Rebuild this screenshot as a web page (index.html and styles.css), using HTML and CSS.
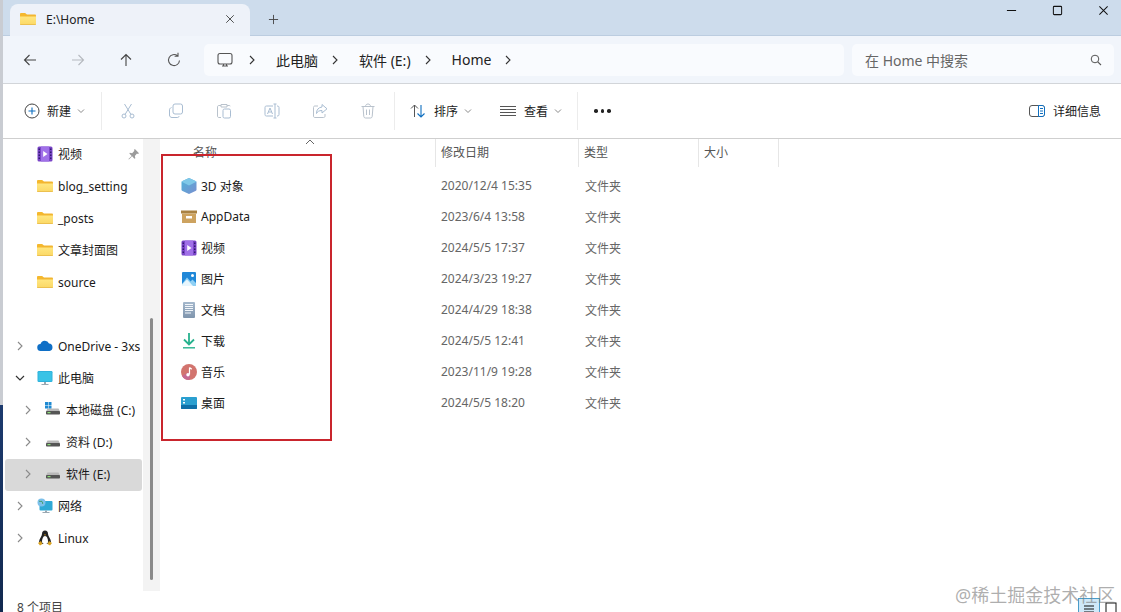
FILE: index.html
```html
<!DOCTYPE html>
<html lang="zh">
<head>
<meta charset="utf-8">
<title>E:\Home</title>
<link rel="stylesheet" href="styles.css">
</head>
<body>
<svg class="defs" width="0" height="0">
  <defs>
    <linearGradient id="docfill" x1="0" y1="0" x2="0" y2="1"><stop offset="0" stop-color="#a5b8cc"/><stop offset="1" stop-color="#7f95ad"/></linearGradient>
    <linearGradient id="cubefill" x1="0" y1="0" x2="1" y2="1"><stop offset="0" stop-color="#4fb3d9"/><stop offset="1" stop-color="#7a8fd0"/></linearGradient>
    <linearGradient id="folderfill" x1="0" y1="0" x2="0" y2="1"><stop offset="0" stop-color="#ffe680"/><stop offset="1" stop-color="#fbd865"/></linearGradient>
    <symbol id="folder" viewBox="0 0 16 16">
      <path d="M0 3.200C0 2.500.5 2 1.200 2h4l1.600 1.600V6H0z" fill="#f5b82e"/>
      <path d="M5.500 3.600h9.300c.7 0 1.200.5 1.200 1.200V6H5z" fill="#f2b530"/>
      <path d="M0 5.600h16v7.200c0 .7-.5 1.200-1.200 1.200H1.200C.5 14 0 13.500 0 12.800z" fill="url(#folderfill)"/>
      <path d="M0 13h16v.3c0 .4-.4.7-.9.7H.9c-.5 0-.9-.3-.9-.7z" fill="#ecc04f"/>
    </symbol>
    <symbol id="video" viewBox="0 0 16 16">
      <rect x=".5" y=".5" width="15" height="15" rx="1.500" fill="#7a45c8"/>
      <path d="M4 .5h8v15H4z" fill="#a070e8"/>
      <path d="M6.200 5l4.300 3-4.300 3z" fill="#fff"/>
      <path d="M1.500 2.500H3V4H1.500zm0 3H3V7H1.500zm0 3H3V10H1.500zm0 3H3V13H1.500zm11.500-9h1.500V4H13zm0 3h1.500V7H13zm0 3h1.500V10H13zm0 3h1.500V13H13z" fill="#321a70"/>
    </symbol>
    <symbol id="drive" viewBox="0 0 16 16">
      <path d="M2.500 6.500h11L15 9.500H1z" fill="#b9b9b9"/>
      <rect x="1" y="9" width="14" height="3.500" rx=".8" fill="#555"/>
      <rect x="2.500" y="10" width="3" height="1.200" fill="#8ee07a"/>
    </symbol>
    <symbol id="chev-r" viewBox="0 0 10 10">
      <path d="M3 1l4 4-4 4" fill="none" stroke="currentColor" stroke-width="1.100"/>
    </symbol>
    <symbol id="caret" viewBox="0 0 8 8">
      <path d="M1 2.500l3 3 3-3" fill="none" stroke="#8a8a8a" stroke-width="1"/>
    </symbol>
  </defs>
</svg>

<div class="desktop-edge"></div>
<main class="window">
  <header class="titlebar">
    <div class="tab">
      <svg class="ic16"><use href="#folder"/></svg>
      <span class="tab-title">E:\Home</span>
      <svg class="tab-close" viewBox="0 0 12 12"><path d="M1.500 1.500l9 9m0-9l-9 9" stroke="#333" stroke-width="1" fill="none"/></svg>
    </div>
    <svg class="tab-add" viewBox="0 0 12 12"><path d="M6 1v10M1 6h10" stroke="#444" stroke-width="1" fill="none"/></svg>
    <div class="win-buttons">
      <svg class="win-btn" viewBox="0 0 12 12"><path d="M1 6h10" stroke="#111" stroke-width="1.100"/></svg>
      <svg class="win-btn" viewBox="0 0 12 12"><rect x="1.500" y="1.500" width="9" height="9" rx="1" fill="none" stroke="#111" stroke-width="1.100"/></svg>
      <svg class="win-btn" viewBox="0 0 12 12"><path d="M1.500 1.500l9 9m0-9l-9 9" stroke="#111" stroke-width="1.100" fill="none"/></svg>
    </div>
  </header>

  <nav class="navbar">
    <div class="nav-arrows">
      <svg class="nav-ic" viewBox="0 0 16 16"><path d="M14 8H2.500M7.500 3l-5 5 5 5" fill="none" stroke="#444" stroke-width="1.100"/></svg>
      <svg class="nav-ic" viewBox="0 0 16 16"><path d="M2 8h11.500M8.500 3l5 5-5 5" fill="none" stroke="#b5b9bf" stroke-width="1.100"/></svg>
      <svg class="nav-ic" viewBox="0 0 16 16"><path d="M8 14V2.500M3 7.500l5-5 5 5" fill="none" stroke="#444" stroke-width="1.100"/></svg>
      <svg class="nav-ic" viewBox="0 0 16 16"><path d="M13.500 8.500A5.500 5.500 0 1 1 11.500 3.800M12 .8v3.400H8.600" fill="none" stroke="#555" stroke-width="1.100"/></svg>
    </div>
    <div class="crumbs">
      <svg class="pc-ic" viewBox="0 0 16 16"><rect x="1" y="1.500" width="14" height="10.500" rx="2" fill="none" stroke="#555" stroke-width="1.100"/><path d="M5 14h6M6.500 12v2M9.500 12v2" stroke="#555" stroke-width="1"/></svg>
      <svg class="crumb-sep"><use href="#chev-r"/></svg>
      <span>此电脑</span>
      <svg class="crumb-sep"><use href="#chev-r"/></svg>
      <span>软件 (E:)</span>
      <svg class="crumb-sep"><use href="#chev-r"/></svg>
      <span>Home</span>
      <svg class="crumb-sep"><use href="#chev-r"/></svg>
    </div>
    <div class="search">
      <span>在 Home 中搜索</span>
      <svg class="search-ic" viewBox="0 0 12 12"><circle cx="5" cy="5" r="3.800" fill="none" stroke="#555" stroke-width="1"/><path d="M7.800 7.800L11 11" stroke="#555" stroke-width="1.100"/></svg>
    </div>
  </nav>

  <section class="toolbar">
    <div class="tool tool-new">
      <svg class="ic16" viewBox="0 0 16 16"><circle cx="8" cy="8" r="7" fill="none" stroke="#444" stroke-width="1"/><path d="M8 4.500v7M4.500 8h7" stroke="#0f6fc0" stroke-width="1.100"/></svg>
      <span>新建</span>
      <svg class="caret"><use href="#caret"/></svg>
    </div>
    <i class="vsep sep-a"></i>
    <div class="tool-group">
      <svg class="ic16" viewBox="0 0 16 16"><g fill="none" stroke="#a9bdd2" stroke-width="1"><circle cx="4" cy="13" r="2"/><circle cx="12" cy="13" r="2"/><path d="M5 11.500L11.500 1M11 11.500L4.500 1"/></g></svg>
      <svg class="ic16" viewBox="0 0 16 16"><g fill="none" stroke="#a9bdd2" stroke-width="1"><rect x="5" y="1" width="9.500" height="10" rx="2"/><path d="M3.500 4.500C2 5 1.500 6 1.500 7v5c0 1.500 1 2.500 2.500 2.500h5c1 0 2-.5 2.300-1.500"/></g></svg>
      <svg class="ic16" viewBox="0 0 16 16"><g fill="none" stroke="#b9c2cc" stroke-width="1"><path d="M5 2.500H3c-1 0-1.500.5-1.500 1.500v9c0 1 .5 1.500 1.500 1.500h2M11 2.500h2c.5 0 1 .2 1.300.5M5 1.500h6v2.500H5z"/><rect x="7" y="6" width="7.500" height="9" rx="1.500" stroke="#a9bdd2"/></g></svg>
      <svg class="ic16" viewBox="0 0 16 16"><g fill="none" stroke="#a9bdd2" stroke-width="1"><path d="M9 3H2.500C1.500 3 1 3.500 1 4.500v7c0 1 .5 1.500 1.500 1.500H9M13 3c1.500 0 2 .5 2 1.500v7c0 1-.5 1.500-2 1.500"/><path d="M11 1v14M9.500 1h3M9.500 15h3M3.500 11l2.500-6 2.500 6M4.500 9h3"/></g></svg>
      <svg class="ic16" viewBox="0 0 16 16"><g fill="none" stroke="#b9c2cc" stroke-width="1"><path d="M6 3H3C2 3 1.500 3.500 1.500 4.500v8.500c0 1 .5 1.500 1.500 1.500h8.500c1 0 1.500-.5 1.500-1.500v-2"/><path d="M10 1.500l5 4.300-5 4.200V7.500c-3 0-4.500 1-5.500 3 0-4 2-6 5.500-6.500z" stroke="#a9bdd2"/></g></svg>
      <svg class="ic16" viewBox="0 0 16 16"><g fill="none" stroke="#b9c2cc" stroke-width="1"><path d="M1.500 3.500h13M5.500 3.500c0-1.500 1-2.500 2.500-2.500s2.500 1 2.500 2.500M3 3.500l.8 10c.1.900.7 1.500 1.700 1.500h5c1 0 1.600-.6 1.700-1.500l.8-10M6.500 6.500v5.500M9.500 6.500v5.500"/></g></svg>
    </div>
    <i class="vsep sep-b"></i>
    <div class="tool tool-sort">
      <svg class="ic16" viewBox="0 0 16 16"><path d="M4.500 14V2M1 5.500L4.500 2 8 5.500" fill="none" stroke="#555" stroke-width="1"/><path d="M11 2v12M7.500 10.500L11 14l3.500-3.500" fill="none" stroke="#0f6fc0" stroke-width="1.100"/></svg>
      <span>排序</span>
      <svg class="caret"><use href="#caret"/></svg>
    </div>
    <div class="tool tool-view">
      <svg class="ic16" viewBox="0 0 16 16"><path d="M0 3.500h16M0 6.500h16M0 9.500h16M0 12.500h16" stroke="#555" stroke-width="1"/></svg>
      <span>查看</span>
      <svg class="caret"><use href="#caret"/></svg>
    </div>
    <i class="vsep sep-c"></i>
    <div class="more"><b></b><b></b><b></b></div>
    <div class="tool tool-details">
      <svg class="ic16" viewBox="0 0 16 16"><rect x=".5" y="2.500" width="15" height="11" rx="2.500" fill="none" stroke="#555" stroke-width="1"/><path d="M9.500 2.500h3.500c1.500 0 2.500 1 2.500 2.500v6c0 1.500-1 2.500-2.500 2.500H9.500z" fill="#fff" stroke="#0f6fc0" stroke-width="1"/><path d="M11 5.500h3M11 8h3M11 10.500h3" stroke="#0f6fc0" stroke-width="1"/></svg>
      <span>详细信息</span>
    </div>
  </section>

  <div class="body">
    <aside class="sidebar">
      <ul class="tree tree-quick">
        <li class="row"><svg class="ic16"><use href="#video"/></svg><span>视频</span>
          <svg class="pin" viewBox="0 0 12 12"><path d="M7.500 0L12 4.500 10.800 5.500 9.800 5 7.500 7.500 8 10 7 10.500 4.500 8 1 11.500.5 11 4 7.500 1.500 5 2 4 4.500 4.500 7 2 6.500 1z" fill="#9b9b9b"/></svg>
        </li>
        <li class="row"><svg class="ic16"><use href="#folder"/></svg><span>blog_setting</span></li>
        <li class="row"><svg class="ic16"><use href="#folder"/></svg><span>_posts</span></li>
        <li class="row"><svg class="ic16"><use href="#folder"/></svg><span>文章封面图</span></li>
        <li class="row"><svg class="ic16"><use href="#folder"/></svg><span>source</span></li>
      </ul>
      <ul class="tree tree-places">
        <li class="row"><svg class="exp"><use href="#chev-r"/></svg>
          <svg class="ic16" viewBox="0 0 16 16"><path d="M4 13a3.500 3.500 0 0 1-.5-7A4.500 4.500 0 0 1 12 5.500 3.800 3.800 0 0 1 12.500 13z" fill="#0f6fc6"/></svg>
          <span class="clip">OneDrive - 3xs</span></li>
        <li class="row"><svg class="exp down" viewBox="0 0 10 10"><path d="M1 3l4 4 4-4" fill="none" stroke="#333" stroke-width="1.200"/></svg>
          <svg class="ic16" viewBox="0 0 16 16"><rect x=".5" y="1" width="15" height="11" rx="1.200" fill="#2fb2dc"/><rect x="1.500" y="2" width="13" height="9" fill="#3ac3e6"/><path d="M7 12h2v2H7zM4.500 14h7v1h-7z" fill="#9aa8b2"/></svg>
          <span>此电脑</span></li>
        <li class="row sub"><svg class="exp"><use href="#chev-r"/></svg>
          <svg class="ic16" viewBox="0 0 16 16"><use href="#drive"/><path d="M0 0h3v3H0zm3.500 0h3v3h-3zM0 3.500h3v3H0zm3.500 0h3v3h-3z" fill="#1f8ad2"/></svg>
          <span>本地磁盘 (C:)</span></li>
        <li class="row sub"><svg class="exp"><use href="#chev-r"/></svg><svg class="ic16"><use href="#drive"/></svg><span>资料 (D:)</span></li>
        <li class="row sub selected"><svg class="exp"><use href="#chev-r"/></svg><svg class="ic16"><use href="#drive"/></svg><span>软件 (E:)</span></li>
        <li class="row"><svg class="exp"><use href="#chev-r"/></svg>
          <svg class="ic16" viewBox="0 0 16 16"><rect x="2.500" y="3" width="13" height="9.500" rx="1" fill="#2fa9d6"/><path d="M8 12.500h2V14H8zM5.500 14h7v1h-7z" fill="#9aa8b2"/><circle cx="4.500" cy="4.500" r="4" fill="#7cc0ea"/><path d="M2 3c1 1 2 0 3 .5s0 2 1 2.500" stroke="#3f9a58" fill="none"/></svg>
          <span>网络</span></li>
        <li class="row"><svg class="exp"><use href="#chev-r"/></svg>
          <svg class="ic16" viewBox="0 0 16 16"><path d="M8 .5c2 0 3 1.500 3 3.500 0 2 3 5 3 8l-3 2H5l-3-2c0-3 3-6 3-8s1-3.500 3-3.500z" fill="#222"/><path d="M8 6c2 0 3 3 3 5.500S9.500 14 8 14s-3-.5-3-2.500S6 6 8 6z" fill="#fff"/><path d="M1 13l3-2 1.500 3-2.500 1.500zM15 13l-3-2-1.500 3 2.500 1.500z" fill="#d9a21f"/><path d="M7 4.500h2L8 5.800z" fill="#e5a81e"/></svg>
          <span>Linux</span></li>
      </ul>
      <div class="scrollbar"></div>
    </aside>

    <section class="files">
      <div class="head">
        <div class="hcell hname">名称<svg class="sort-up" viewBox="0 0 10 6"><path d="M1 5l4-4 4 4" fill="none" stroke="#666" stroke-width="1"/></svg></div>
        <div class="hcell">修改日期</div>
        <div class="hcell">类型</div>
        <div class="hcell">大小</div>
      </div>
      <div class="file">
        <div class="fname"><svg class="ic16" viewBox="0 0 16 16"><path d="M8 0l6.500 3c.6.300 1 .8 1 1.500v7c0 .7-.4 1.200-1 1.500L8 16l-6.500-3c-.6-.3-1-.8-1-1.500v-7c0-.7.4-1.200 1-1.500z" fill="url(#cubefill)"/><path d="M8 0l6.500 3c.5.200.8.500.9.800L8 7.500.6 3.800c.1-.3.400-.6.900-.8z" fill="#7fc8e8"/></svg><span>3D 对象</span></div>
        <div>2020/12/4 15:35</div><div>文件夹</div>
      </div>
      <div class="file">
        <div class="fname"><svg class="ic16" viewBox="0 0 16 16"><path d="M0 1.500h16v3H0z" fill="#a98243"/><path d="M1 4.500h14V14H1z" fill="#cda360"/><rect x="5" y="7" width="6" height="2.500" fill="#fff"/></svg><span>AppData</span></div>
        <div>2023/6/4 13:58</div><div>文件夹</div>
      </div>
      <div class="file">
        <div class="fname"><svg class="ic16"><use href="#video"/></svg><span>视频</span></div>
        <div>2024/5/5 17:37</div><div>文件夹</div>
      </div>
      <div class="file">
        <div class="fname"><svg class="ic16" viewBox="0 0 16 16"><rect x="1" y="1" width="14" height="14" rx="1" fill="#2088d8"/><path d="M1 13l5-6.500 3.500 4 2-2L15 12v3H1z" fill="#8fd0f4"/><path d="M1 15v-1.500L6 8.500l6 6.500z" fill="#e8f6fd"/><circle cx="11.500" cy="4.500" r="1.500" fill="#fff"/></svg><span>图片</span></div>
        <div>2024/3/23 19:27</div><div>文件夹</div>
      </div>
      <div class="file">
        <div class="fname"><svg class="ic16" viewBox="0 0 16 16"><rect x="2" y="0" width="12" height="16" rx="1" fill="url(#docfill)"/><path d="M4 2.500h8M4 4.500h8M4 6.500h8M4 8.500h8M4 11h6" stroke="#f2f6fa" stroke-width="1" fill="none"/></svg><span>文档</span></div>
        <div>2024/4/29 18:38</div><div>文件夹</div>
      </div>
      <div class="file">
        <div class="fname"><svg class="ic16" viewBox="0 0 16 16"><path d="M8 0v11M3 6.500L8 11.500l5-5" fill="none" stroke="#27b28e" stroke-width="1.800"/><path d="M2 14.800h12" stroke="#27b28e" stroke-width="1.400"/></svg><span>下载</span></div>
        <div>2024/5/5 12:41</div><div>文件夹</div>
      </div>
      <div class="file">
        <div class="fname"><svg class="ic16" viewBox="0 0 16 16"><circle cx="8" cy="8" r="8" fill="#d2746e"/><path d="M8 8a8 8 0 0 1 0 8 8 8 0 0 1-7-4z" fill="#c56a92"/><path d="M8.500 3.500v7M8.500 3.500c1 1 2 1.500 2.500 1.500" stroke="#fff" stroke-width="1.200" fill="none"/><circle cx="7" cy="10.800" r="1.700" fill="#fff"/></svg><span>音乐</span></div>
        <div>2023/11/9 19:28</div><div>文件夹</div>
      </div>
      <div class="file">
        <div class="fname"><svg class="ic16" viewBox="0 0 16 16"><rect y="2" width="16" height="12" rx="1" fill="#2a9fd0"/><path d="M0 10h16v3c0 .6-.4 1-1 1H1c-.6 0-1-.4-1-1z" fill="#0f6fa8"/><path d="M2 4h2v1.500H2zM2 7h2v1.500H2z" fill="#fff"/></svg><span>桌面</span></div>
        <div>2024/5/5 18:20</div><div>文件夹</div>
      </div>
    </section>
  </div>

  <footer class="status">
    <span>8 个项目</span>
    <div class="view-switch">
      <span class="vs vs-on"><svg viewBox="0 0 12 12"><path d="M1 3h10M1 6h10M1 9h10" stroke="#111" stroke-width="1"/></svg></span>
      <span class="vs"><svg viewBox="0 0 12 12"><rect x="1" y="1" width="10" height="10" fill="none" stroke="#111" stroke-width="1"/></svg></span>
    </div>
  </footer>
</main>

<div class="redbox"></div>
<div class="watermark">@稀土掘金技术社区</div>
</body>
</html>
```

FILE: styles.css
```css
* { box-sizing: border-box; }
html, body { margin: 0; height: 100%; overflow: hidden; }
body {
  display: flex;
  width: 1121px;
  height: 612px;
  font: 12px "Noto Sans", "Noto Sans CJK SC", sans-serif;
  color: #1a1a1a;
  background: #fff;
  position: relative;
}
ul { list-style: none; margin: 0; padding: 0; }
.defs { position: absolute; }
svg { display: block; flex: none; overflow: visible; }
.ic16 { width: 16px; height: 16px; }

.desktop-edge {
  width: 3px;
  flex: none;
  background: linear-gradient(#c9ccd2 0, #c9ccd2 405px, #1c3a6e 405px, #12294f 100%);
}
.window { flex: 1; min-width: 0; display: flex; flex-direction: column; height: 612px; }

/* Title bar */
.titlebar {
  height: 36px;
  flex: none;
  display: flex;
  align-items: flex-end;
  padding-left: 7px;
  background: #cddcec;
  border-bottom: 1px solid #bccde0;
}
.tab {
  width: 240px;
  height: 32px;
  display: flex;
  align-items: center;
  gap: 10px;
  padding: 0 15px 2px 10px;
  border-radius: 8px 8px 0 0;
  background: #eef2f9;
  margin-bottom: -1px;
}
.tab-title { flex: 1; font-size: 12px; color: #222; }
.tab-close { width: 10px; height: 10px; }
.tab-add { width: 11px; height: 11px; margin: 0 0 10px 18px; }
.win-buttons {
  margin-left: auto;
  align-self: flex-start;
  display: flex;
  gap: 35px;
  padding: 5px 12px 0 0;
}
.win-btn { width: 11px; height: 11px; }

/* Nav bar */
.navbar {
  height: 48px;
  flex: none;
  display: flex;
  align-items: center;
  padding: 0 7px 0 19px;
  background: #f1f5fb;
  border-bottom: 1px solid #d2d5d9;
}
.nav-arrows { display: flex; gap: 32px; width: 182px; flex: none; }
.nav-ic { width: 16px; height: 16px; }
.crumbs {
  width: 640px;
  height: 32px;
  flex: none;
  display: flex;
  align-items: center;
  padding-left: 13px;
  border-radius: 5px;
  background: #f9fbfe;
  font-size: 14px;
  color: #222;
}
.pc-ic { width: 16px; height: 16px; margin-right: 14px; }
.crumb-sep { width: 10px; height: 10px; margin-right: 19px; color: #333; }
.crumbs span { margin-right: 12px; }
.search {
  flex: 1;
  height: 32px;
  margin-left: 8px;
  display: flex;
  align-items: center;
  justify-content: space-between;
  padding: 0 12px 0 13px;
  border-radius: 5px;
  background: #f9fbfe;
  font-size: 14px;
  color: #666;
}
.search-ic { width: 12px; height: 12px; }

/* Toolbar */
.toolbar {
  height: 55px;
  flex: none;
  display: flex;
  align-items: center;
  background: #fff;
  border-bottom: 1px solid #cfcfcf;
  padding-left: 21px;
}
.tool { display: flex; align-items: center; color: #222; }
.tool span { font-size: 12px; }
.caret { width: 8px; height: 8px; margin-left: 5px; }
.tool-new { gap: 7px; }
.tool-new .caret { margin-left: -1px; }
.vsep { width: 1px; height: 38px; background: #ececec; flex: none; }
.sep-a { margin-left: 16px; }
.tool-group { display: flex; gap: 32px; margin-left: 18px; }
.sep-b { margin-left: 18px; }
.tool-sort { gap: 8px; margin-left: 15px; }
.tool-sort .caret, .tool-view .caret { margin-left: -2px; }
.tool-view { gap: 8px; margin-left: 28px; }
.sep-c { margin-left: 15px; }
.more { display: flex; gap: 3px; margin-left: 16px; }
.more b { width: 3.500px; height: 3.500px; border-radius: 50%; background: #222; }
.tool-details { gap: 8px; margin-left: auto; margin-right: 20px; }

/* Main */
.body { flex: 1; min-height: 0; display: flex; }
.sidebar {
  width: 157px;
  flex: none;
  background: linear-gradient(90deg, #fff 140px, #f3f3f3 140px);
  position: relative;
}
.tree-places { margin-top: 32px; }
.row {
  height: 32px;
  width: 137px;
  margin-left: 2px;
  display: flex;
  align-items: center;
  padding: 0 0 2px 32px;
  gap: 5px;
  position: relative;
  border-radius: 3px;
  white-space: nowrap;
}
.row span { color: #1a1a1a; }
.clip { overflow: hidden; }
.exp {
  position: absolute;
  left: 10px;
  top: 10px;
  width: 10px;
  height: 10px;
  color: #8a8a8a;
}
.sub { padding-left: 40px; }
.sub .exp { left: 18px; }
.selected { background: #d9d9d9; }
.pin { width: 11px; height: 11px; margin-left: auto; margin-right: 3px; }
.scrollbar {
  position: absolute;
  left: 147px;
  top: 179px;
  width: 3px;
  height: 262px;
  border-radius: 2px;
  background: #8b8b8b;
}

.files { flex: 1; min-width: 0; }
.head, .file {
  display: grid;
  grid-template-columns: 276px 143px 120px 80px;
}
.head { height: 28px; margin-bottom: 4px; }
.hcell {
  display: flex;
  align-items: center;
  padding: 0 0 2px 5px;
  color: #555;
  border-right: 1px solid #e6e6e6;
  position: relative;
}
.hcell.hname { padding-left: 33px; }
.sort-up { position: absolute; left: 145px; top: 0; width: 10px; height: 6px; }
.file { height: 31px; align-items: center; color: #666; padding-bottom: 2px; }
.file > div { padding-left: 5px; }
.file > div:last-child { padding-left: 6px; }
.file > .fname { display: flex; align-items: center; gap: 4px; padding-left: 21px; color: #1a1a1a; }

/* Status */
.status {
  height: 21px;
  flex: none;
  display: flex;
  align-items: flex-start;
  justify-content: space-between;
  padding: 0 3px 0 14px;
  color: #444;
  overflow: hidden;
}
.status > span { margin-top: 7px; }
.view-switch { display: flex; align-items: flex-start; gap: 3px; margin-top: 7px; }
.vs { width: 15px; height: 20px; display: flex; justify-content: center; padding-top: 4px; }
.vs svg { width: 12px; height: 12px; }
.vs-on { width: 22px; background: #cfe8f8; border: 1px solid #4a9cc9; }

/* Overlays */
.redbox {
  position: absolute;
  left: 161px;
  top: 154px;
  width: 171px;
  height: 287px;
  border: 2px solid #c9252d;
}
.watermark {
  position: absolute;
  left: 955px;
  top: 582px;
  font-size: 18px;
  line-height: 26px;
  color: rgba(120, 120, 120, .6);
  white-space: nowrap;
}
```
